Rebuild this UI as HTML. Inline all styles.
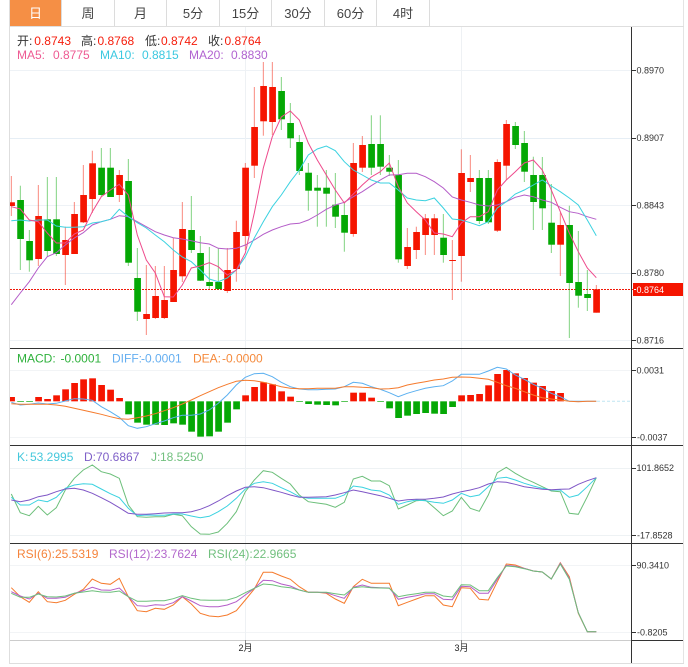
<!DOCTYPE html>
<html><head><meta charset="utf-8">
<style>
html,body{margin:0;padding:0;background:#fff;width:688px;height:667px;overflow:hidden}
#c{position:absolute;left:0;top:0}
text{font-family:"Liberation Sans","Noto Sans CJK SC",sans-serif}
.t{font-size:13px;fill:#444;text-anchor:middle}
.l{font-size:12px}
.a{font-size:9px;fill:#333}
</style></head><body>
<svg id="c" width="688" height="667" viewBox="0 0 688 667" xmlns="http://www.w3.org/2000/svg">
<g id="g"></g>
<g id="chart"></g>
<rect x="0" y="0" width="9" height="667" fill="#fff"/>
<rect x="9" y="0" width="1" height="664" fill="#dedede"/>
<rect x="683" y="0" width="1" height="664" fill="#e4e4e4"/>
<rect x="9" y="663" width="675" height="1" fill="#dedede"/>
<rect x="10" y="0" width="51" height="26" fill="#f58f45"/>
<rect x="9" y="26" width="675" height="1" fill="#dedede"/>
<g fill="#dcdcdc"><rect x="114" y="0" width="1" height="26"/><rect x="61" y="0" width="1" height="26"/><rect x="166" y="0" width="1" height="26"/><rect x="219" y="0" width="1" height="26"/><rect x="271" y="0" width="1" height="26"/><rect x="324" y="0" width="1" height="26"/><rect x="376" y="0" width="1" height="26"/><rect x="429" y="0" width="1" height="26"/></g>
<text class="t" x="35.5" y="18" style="fill:#fff">日</text>
<text class="t" x="88" y="18">周</text>
<text class="t" x="140.500" y="18">月</text>
<text class="t" x="193" y="18">5分</text>
<text class="t" x="245.500" y="18">15分</text>
<text class="t" x="298" y="18">30分</text>
<text class="t" x="350.500" y="18">60分</text>
<text class="t" x="403" y="18">4时</text>

<g class="l">
<text x="17" y="45" fill="#333">开:</text><text x="34.300" y="45" fill="#f51d0c">0.8743</text>
<text x="81" y="45" fill="#333">高:</text><text x="97.500" y="45" fill="#f51d0c">0.8768</text>
<text x="145" y="45" fill="#333">低:</text><text x="161" y="45" fill="#f51d0c">0.8742</text>
<text x="208" y="45" fill="#333">收:</text><text x="224.500" y="45" fill="#f51d0c">0.8764</text>
<g fill="#ee5a92"><text x="17" y="59">MA5:</text><text x="53" y="59">0.8775</text></g>
<g fill="#3bc8e0"><text x="100" y="59">MA10:</text><text x="142" y="59">0.8815</text></g>
<g fill="#b163d0"><text x="189" y="59">MA20:</text><text x="231" y="59">0.8830</text></g>
<g fill="#2fb13c"><text x="17" y="362.500">MACD:</text><text x="60.500" y="362.500">-0.0001</text></g>
<g fill="#64aef0"><text x="112" y="362.500">DIFF:</text><text x="141" y="362.500">-0.0001</text></g>
<g fill="#f58a3c"><text x="193" y="362.500">DEA:</text><text x="222" y="362.500">-0.0000</text></g>
<g fill="#45c8dc"><text x="17" y="461">K:</text><text x="30" y="461">53.2995</text></g>
<g fill="#7f60c8"><text x="84" y="461">D:</text><text x="96" y="461">70.6867</text></g>
<g fill="#72c07f"><text x="151" y="461">J:</text><text x="160" y="461">18.5250</text></g>
<g fill="#f5843c"><text x="17" y="558">RSI(6):</text><text x="55" y="558">25.5319</text></g>
<g fill="#b368cc"><text x="109" y="558">RSI(12):</text><text x="154" y="558">23.7624</text></g>
<g fill="#72c07f"><text x="208" y="558">RSI(24):</text><text x="253" y="558">22.9665</text></g>
</g>

<g stroke="#333" stroke-width="1" fill="none">
<path d="M631.500 27V663"/>
<path d="M10 348.500H683M10 445.500H683M10 543.500H683"/>
<path d="M631.500 640.500H683"/>
<path d="M632 70.500h4M632 138.500h4M632 205.500h4M632 273.500h4M632 340.500h4M632 370.500h4M632 437.500h4M632 468.500h4M632 535.500h4M632 565.500h4M632 632.500h4"/>
</g>
<path d="M10 640.500H631" stroke="#ccc" fill="none"/>
<path d="M245.500 640v4M461.500 640v4" stroke="#888" fill="none"/>
<rect x="633" y="283" width="50" height="13" fill="#f51500"/>
<path d="M634 289.500h2" stroke="#fff"/>
<text class="a" x="636.500" y="292.800" style="fill:#fff">0.8764</text>
<g class="a">
<text x="636.500" y="73.500">0.8970</text>
<text x="636.500" y="141">0.8907</text>
<text x="636.500" y="208.500">0.8843</text>
<text x="636.500" y="276">0.8780</text>
<text x="636.500" y="343.500">0.8716</text>
<text x="636.500" y="373.500">0.0031</text>
<text x="637" y="440.500">-0.0037</text>
<text x="636.500" y="471">101.8652</text>
<text x="637" y="538.500">-17.8528</text>
<text x="636.500" y="568.500">90.3410</text>
<text x="637" y="635.500">-0.8205</text>
<text x="245.500" y="651" text-anchor="middle" style="font-size:9px;fill:#222">2月</text>
<text x="461.500" y="651" text-anchor="middle" style="font-size:9px;fill:#222">3月</text>
</g>
</svg>
<script>
var NS="http://www.w3.org/2000/svg",G=document.getElementById("g"),C=document.getElementById("chart");
function el(p,n,a){var e=document.createElementNS(NS,n);for(var k in a)e.setAttribute(k,a[k]);p.appendChild(e);return e}
[[70.5,"#eef2f6"],[138.5,"#e6eef5"],[205.5,"#eef2f6"],[273.5,"#e6eef5"],[340.5,"#eef2f6"],[370.5,"#f2f4f6"],[437.5,"#f2f4f6"],[468.5,"#eef2f4"],[535.5,"#eef2f4"],[565.5,"#f2f4f6"],[632.5,"#f2f4f6"]].forEach(function(g){
 el(G,"rect",{x:10,y:g[0]-.5,width:621,height:1,fill:g[1]});
});
[245,461].forEach(function(x){el(G,"rect",{x:x,y:27,width:1,height:613,fill:"#eef1f4"})});
el(G,"path",{d:"M10 289.500H634",stroke:"#f01808","stroke-width":1,"stroke-dasharray":"2 1",fill:"none"});
el(G,"path",{d:"M597 401.300H630",stroke:"#bfe6f2","stroke-width":1,"stroke-dasharray":"3 2",fill:"none"});

var R="#f51500",V="#05a805";
var K=[
[1,176,202.3,206,216],[0,185.7,200,239,270],[0,230,241,260.3,271.7],[1,185,216,259,266],[0,177,219.3,251,256.7],[0,177,219.3,254,256],[1,226.7,240,255,285],[1,202,214,254,254],[1,165,195,222.3,223],[1,150.7,163.3,199,213],
[0,148,167.7,195,197],[0,148,167.7,197,197],[1,170,175,195,202],[0,159,181,262.7,266],[0,248,278,311.7,321],[1,265,314,319,335],[1,266,296,318,319],[1,266,300,318,319],[1,238,270,302,302],[1,202,229,276.3,282],
[0,196,230,250,253],[0,236,253,280.7,281],[0,247,282,286,289],[0,248,282,289,290],[1,248,270,291,293],[1,220.7,232,269,281.7],[1,163,167.7,236,250],[1,87,127,165.7,178],[1,62,86,121.3,135.7],[1,62,87,122,135],
[0,77,91,119.3,130],[0,103,123,138.3,148],[0,135,142,171,175],[0,163,172.7,190.7,210.7],[0,175,187.7,190.7,226.7],[0,170,187.7,193.7,226.7],[0,173,204.7,216.7,228],[0,203,215,232.7,251.7],[1,143,163,234,236.7],[1,136,145,167.7,172],
[0,115.3,144,167.7,175],[0,115.3,144,166.7,175],[0,155,167.7,171.7,176],[0,160,175,259.3,262.7],[1,228,247,266,269],[1,226.7,232,250,259],[1,214,218.3,235,255],[1,214,218.3,235,255],[0,214,237.7,255,262.7],[1,240,260,261,300],
[1,149.3,173,256,281.7],[1,155,178,182,192],[0,170,178,221,224],[0,170,178,222.3,224],[1,159.3,162,230.7,232],[1,120,124,165.7,180],[0,122,126,145,149],[0,131,143,171.7,182],[0,156.7,175,202,230],[0,157,175,208.3,230],
[0,184,222.7,244.7,253],[1,212.7,225,244.7,276],[0,205.7,225,283,338],[0,231,282,295.7,307.700],[0,270,294,298,311],[1,285,289.3,312.7,312.7]];
function X(i){return (34+27*i)/3}
K.forEach(function(c,i){var col=c[0]?R:V,x=X(i);
 el(C,"rect",{x:x-.5,y:c[1],width:1,height:c[4]-c[1],fill:col,opacity:.5});
 el(C,"rect",{x:x-3.1,y:c[2],width:6.7,height:c[3]-c[2],fill:col});
});
function L(a,base,s,col){
 var p=a.map(function(v,i){return X(i).toFixed(1)+","+(base+v*s).toFixed(1)}).join(" ");
 el(C,"polyline",{points:p,fill:"none",stroke:col,"stroke-width":1});
}
var ma5=[206.7,209,220,221.7,233,243,243,234,230,211.7,196.7,190,184.3,195,235,260,273,296.7,297,285,268,266,262.7,266.7,275,270,253,213,168,136.7,117,111,120,143,160,175,190,203,194,185,177,171.7,163,186.7,203,211.7,220,233,234,236.7,223,216.7,216.7,211.7,190,180,171.7,163,160,170,190,211.7,233,251.7,268,277.7];
var ma10=[220.7,220,221,220,220,226,227.3,227.3,226.7,223,221.7,219.3,209.3,216.7,222.7,228,235,241.7,250,257,261.7,270,279,281.7,278,270,256.7,238,221.7,206.7,195,181.7,170,155,149,146,150.7,161.7,170,175,180,183,183,190,198,200,200.7,198,208,219,220,222.7,225.7,221.7,208,201.7,194,190,185,180,186,191.7,198,205,220,235.7];
var ma20=[304.7,293,281.7,268,256.7,252.7,245,238,232.7,225,221.7,219.3,215.7,216.7,221.7,226.7,231.7,235,237.7,239,240.7,242.7,244,248.3,249,248.3,245,240,234.3,230,226.7,224,223.3,220,215,209.3,205,202.3,196.7,191.7,185.7,180,175,174.7,173.3,173.3,176.7,181.7,188,197,200,202.3,205,206,205,201.7,197.3,195,196.7,200,202.3,207.3,211.7,213.3,216.7,219.3];
L(ma20,0,1,"#b45cc8");L(ma10,0,1,"#3bd2e0");L(ma5,0,1,"#ee4a8c");

var macd=[156,171,171,156,162,151,133,114,103,100,120,134,159,208,233,239,239,240,235,239,260,275,274,260,233,193,151,126,112,118,139,155,171,177,179,180,181,171,143,143,158,171,190,219,212,207,204,206,207,186,151,150,147,121,87,75,85,99,113,123,138,144,169,169,169,169];
macd.forEach(function(v,i){ if(v==169)return;
 var y0=Math.min(v,169),y1=Math.max(v,169);
 el(C,"rect",{x:X(i)-3.1,y:345+y0/3,width:6.7,height:(y1-y0)/3,fill:v<169?R:V});
});
var dea=[176,178,178,178,178,180,184,190,196,202,208,215,221,223,218,213,206,197,188,177,165,152,140,128,118,109,106,107,112,118,125,130,131,131,130,130,130,125,125,127,128,132,131,128,120,115,110,105,102,97,96,97,100,103,112,122,130,140,150,158,162,165,169,170,169,169];
var diff=[172,180,178,174,177,175,168,161,162,166,185,200,217,242,250,245,236,228,218,211,211,207,195,175,150,120,97,86,85,95,112,125,132,134,134,133,132,125,112,115,125,133,143,155,145,137,130,125,122,108,88,88,88,78,67,72,90,103,118,130,145,155,169,169,169,169];
L(diff,345,1/3,"#5bb0f0");L(dea,345,1/3,"#f57a2c");

var kK=[157,180,180,165,170,157,130,120,116,118,132,146,158,190,212,210,211,211,207,207,213,218,214,200,183,160,132,115,110,115,128,140,155,160,160,160,160,150,123,127,135,138,150,178,170,165,167,172,175,165,145,155,150,125,100,97,105,115,123,130,135,135,157,150,125,98];
var kD=[165,170,165,155,150,140,132,130,135,145,158,172,188,205,208,208,206,204,203,203,200,193,182,168,152,138,127,125,128,135,142,150,157,157,156,155,150,143,135,140,146,152,160,168,164,163,163,160,156,147,140,135,128,117,110,112,118,125,129,133,134,133,132,118,107,98];
var kJ=[147,203,212,184,210,188,135,100,75,60,80,87,100,180,215,217,215,215,208,212,245,267,268,261,235,200,140,105,77,82,100,117,150,170,174,178,187,172,102,94,108,108,122,192,180,167,165,188,212,198,157,190,199,150,83,67,85,100,112,125,138,140,205,208,155,98];
L(kJ,445,1/3,"#6cbf7a");L(kK,445,1/3,"#3bd2e0");L(kD,445,1/3,"#7f56c6");

var r6=[143,170,187,155,185,188,181,163,148,117,130,133,115,170,212,215,205,208,195,170,192,220,228,230,225,212,180,147,97,97,108,118,140,157,157,160,177,190,140,118,130,130,130,197,187,177,167,167,195,200,143,145,178,180,125,72,75,85,93,96,117,68,110,220,275,275];
var r12=[155,168,177,160,175,175,172,160,152,142,150,151,144,170,197,199,194,196,188,170,183,197,200,200,195,185,165,145,121,122,132,138,150,157,157,158,167,175,142,135,142,143,144,178,172,167,161,161,178,179,139,140,160,160,118,76,79,85,93,96,117,70,115,218,275,275];
var r24=[160,172,172,162,170,171,168,160,156,152,156,157,153,170,184,184,182,182,176,167,175,180,181,181,180,172,158,145,132,134,140,143,150,157,157,157,161,165,143,140,143,144,145,170,165,161,157,157,168,171,134,135,152,152,113,78,80,86,93,96,117,72,118,218,275,275];
L(r6,540,1/3,"#f57a2c");L(r12,540,1/3,"#b45cc8");L(r24,540,1/3,"#6cbf7a");
</script>
</body></html>
